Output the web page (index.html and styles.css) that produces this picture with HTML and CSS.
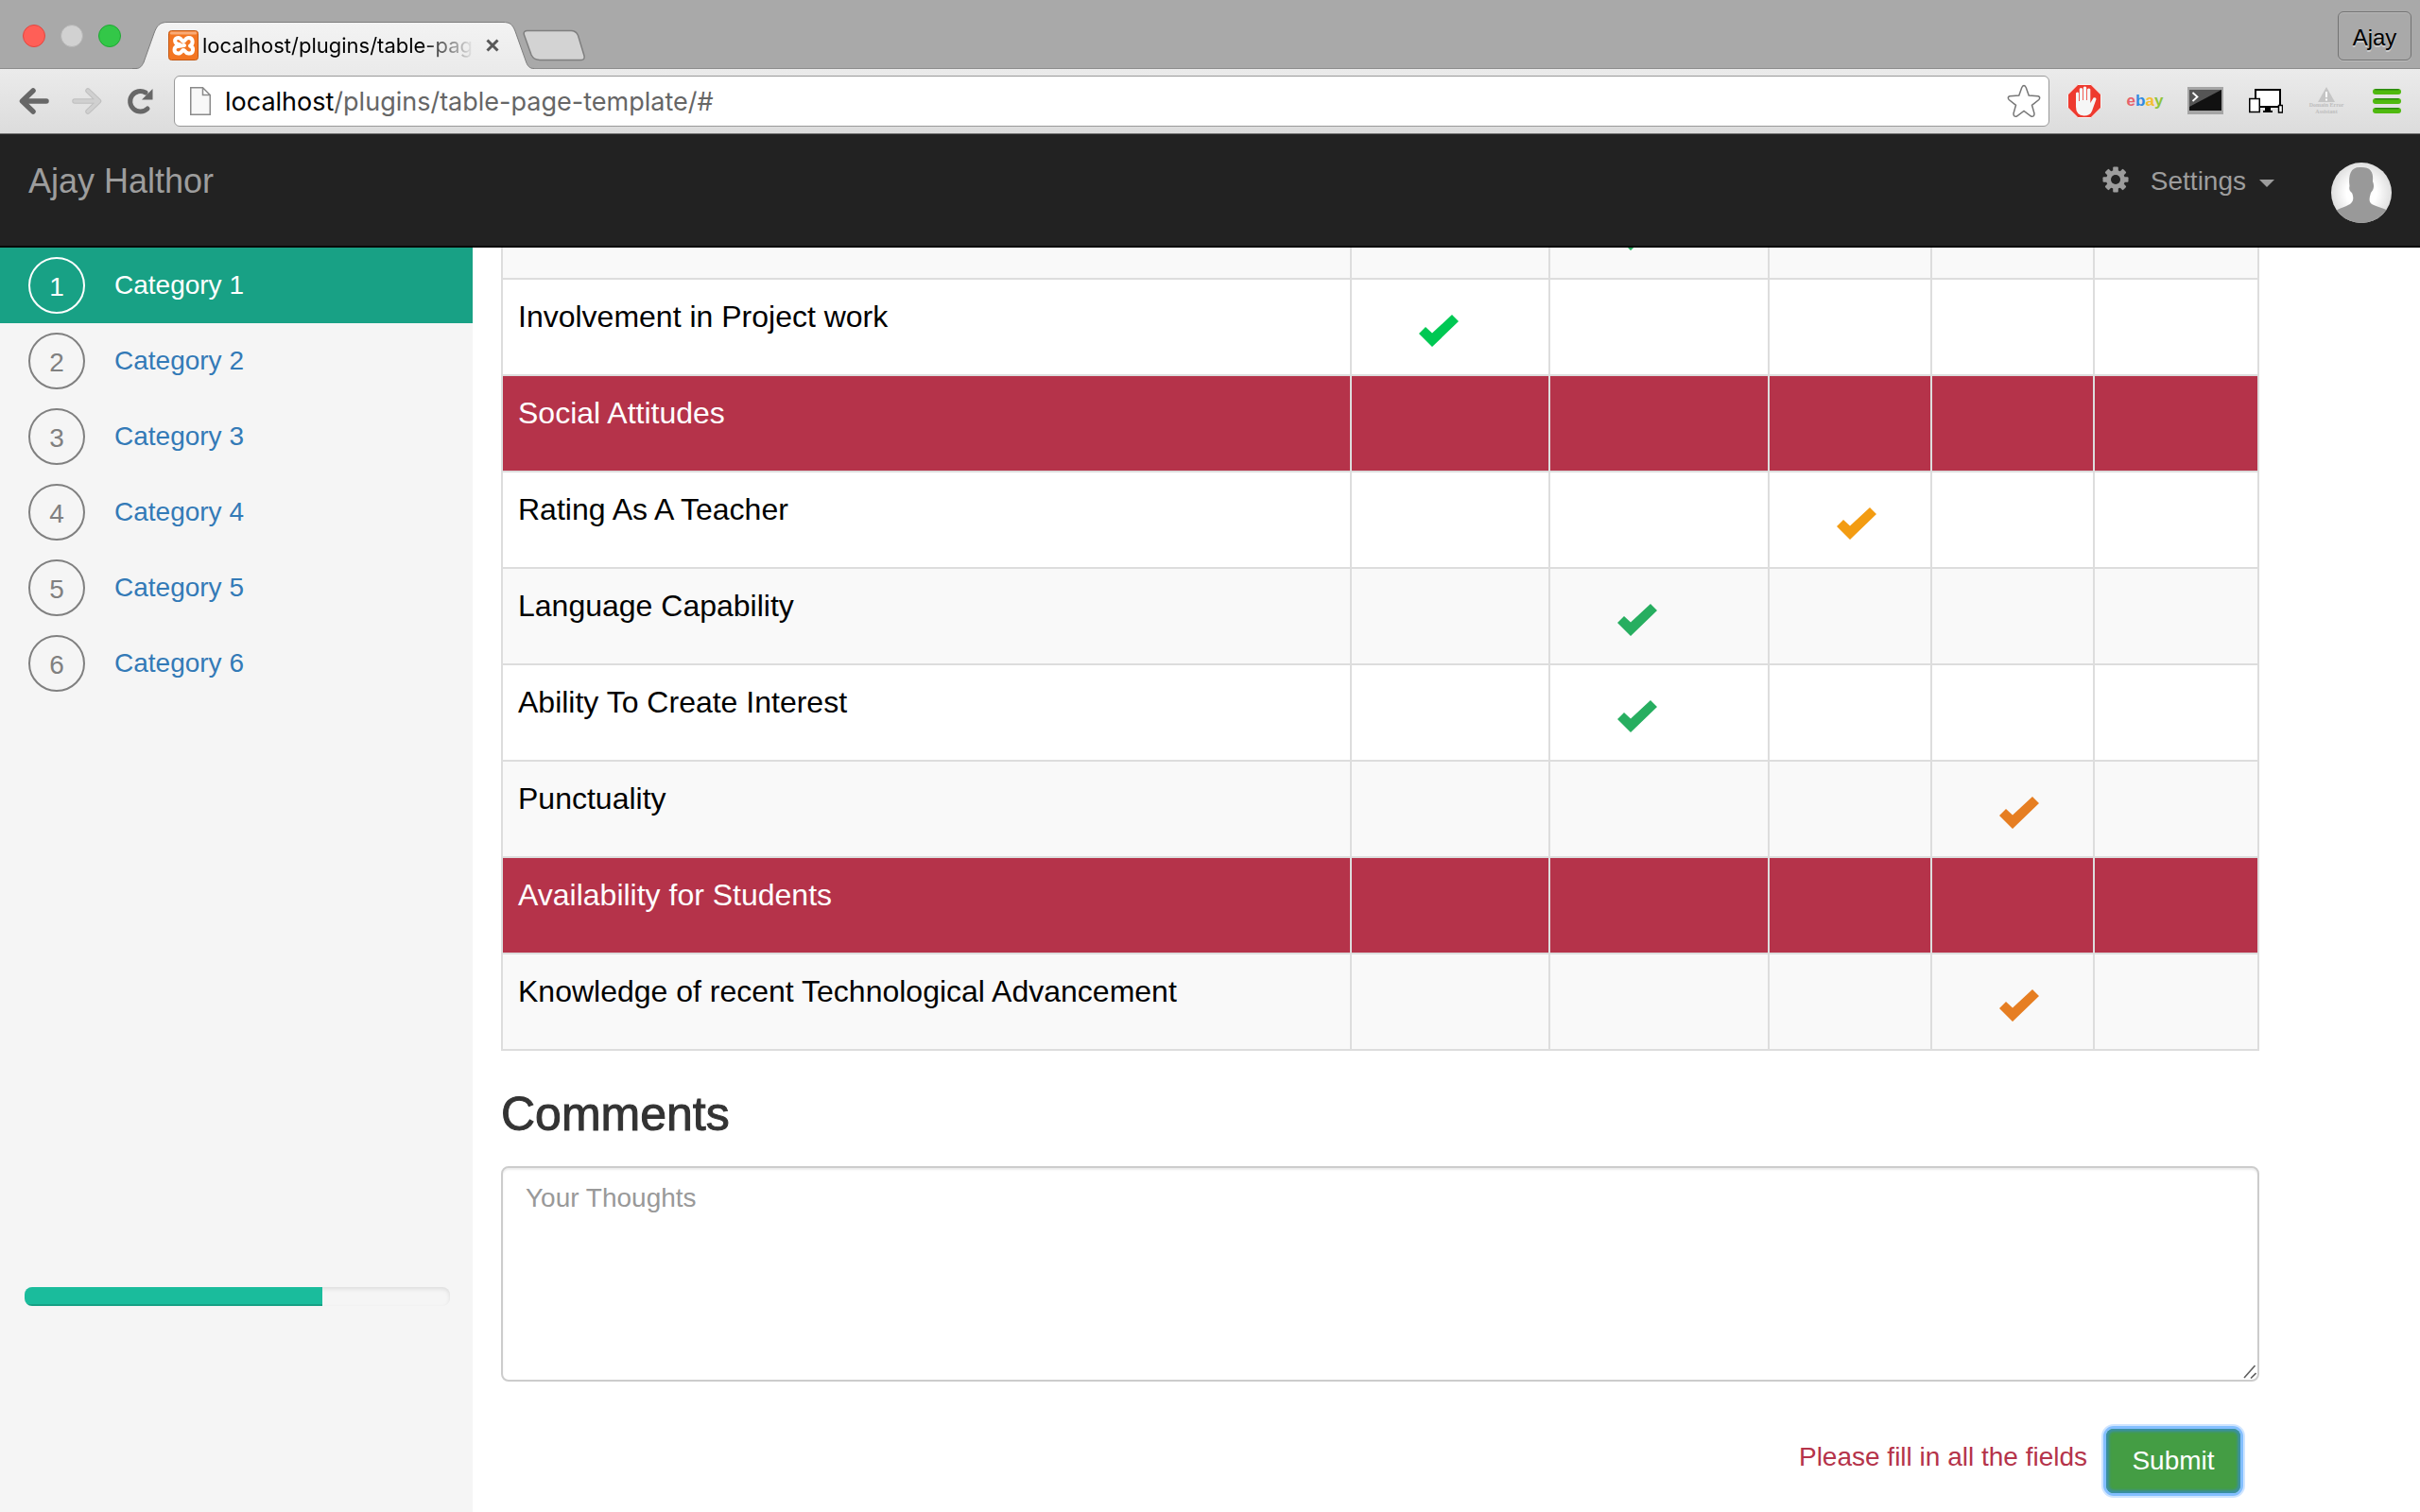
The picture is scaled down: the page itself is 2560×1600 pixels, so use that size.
FILE: index.html
```html
<!DOCTYPE html>
<html lang="en">
<head>
<meta charset="utf-8">
<title>localhost/plugins/table-page-template/#</title>
<link rel="stylesheet" href="styles.css">
</head>
<body>
<svg class="defs" aria-hidden="true">
  <defs>
    <symbol id="tick" viewBox="0 0 42 34"><path d="M0 20 L7 13 L14 19.500 L35 0 L42 7 L14 34 Z" fill="currentColor"/></symbol>
  </defs>
</svg>

<header class="browser">
  <div class="tabstrip">
    <div class="lights">
      <span class="light light-close"></span>
      <span class="light light-min"></span>
      <span class="light light-max"></span>
    </div>
    <div class="tab">
      <svg class="tab-shape" viewBox="0 0 425 50" aria-hidden="true">
        <defs><linearGradient id="tg" x1="0" y1="0" x2="0" y2="1"><stop offset="0" stop-color="#f3f3f3"/><stop offset="1" stop-color="#ebebeb"/></linearGradient></defs>
        <path d="M0 50 V49.500 H4 C8 49.500 10 47 12 43 L23 12 C26 4 29 .500 37 .500 H392 C400 .500 402 3 405 10 L416 41 C418 47 420 49.500 425 49.500 V50 Z" fill="url(#tg)"/>
        <path d="M0 49.500 H4 C8 49.500 10 47 12 43 L23 12 C26 4 29 .500 37 .500 H392 C400 .500 402 3 405 10 L416 41 C418 47 420 49.500 425 49.500" fill="none" stroke="#7d7d7d"/>
      </svg>
      <svg class="favicon" viewBox="0 0 32 32" aria-hidden="true">
        <rect x=".5" y=".5" width="31" height="31" rx="3" fill="#f37623" stroke="#c25a17"/>
        <rect x="2" y="1.500" width="28" height="3" rx="1" fill="#f9ab77"/>
        <path d="M12 15 C6 15 5.500 8 10.500 8 C14.500 8 14 12 16 12 C18 12 17.500 8 21.500 8 C27 8 26.500 15 23 16.500 C27.500 18 27 25 21.500 24.500 C17.500 24 18 21 16 21 C14 21 14.500 24.500 10.500 24.500 C5 24 5.500 17.500 10 17 L17 16" fill="none" stroke="#fff" stroke-width="4" stroke-linecap="round" stroke-linejoin="round"/>
      </svg>
      <span class="tab-title">localhost/plugins/table-pag</span>
      <button class="tab-close" aria-label="Close tab"><svg viewBox="0 0 14 14"><path d="M1.500 1.500 L12.500 12.500 M12.500 1.500 L1.500 12.500" stroke="#585858" stroke-width="3"/></svg></button>
    </div>
    <button class="newtab" aria-label="New tab"><svg viewBox="0 0 66 34"><path d="M5 1.500 H51 C55 1.500 57 3 58.500 6.500 L65 28 C65.500 31 64.500 32.500 62 32.500 H18 C13 32.500 11 31 9 27 L1.500 6 C.5 3 2 1.500 5 1.500 Z" fill="#d3d3d3" stroke="#7f7f7f" stroke-width="1.500"/></svg></button>
    <button class="profile">Ajay</button>
  </div>
  <div class="toolbar">
    <button class="tool nav-tool" aria-label="Back"><svg width="32" height="28" viewBox="0 0 32 28"><path d="M15 3 L3.500 14 L15 25 M4 14 H29" fill="none" stroke="#676767" stroke-width="5.500" stroke-linecap="round" stroke-linejoin="round"/></svg></button>
    <button class="tool nav-tool" aria-label="Forward"><svg width="32" height="28" viewBox="0 0 32 28"><path d="M17 3 L28.500 14 L17 25 M28 14 H3" fill="none" stroke="#bfbfbf" stroke-width="5.500" stroke-linecap="round" stroke-linejoin="round"/><path d="M17 3 L28.500 14 L17 25 M28 14 H3" fill="none" stroke="#d0d0d0" stroke-width="3.500" stroke-linecap="round" stroke-linejoin="round"/></svg></button>
    <button class="tool nav-tool" aria-label="Reload"><svg width="28" height="28" viewBox="0 0 28 28"><path d="M22 22 A10.800 10.800 0 1 1 20 5" fill="none" stroke="#676767" stroke-width="5" stroke-linecap="round"/><path d="M27.500 1 V12.500 H16 Z" fill="#676767"/></svg></button>
    <div class="omnibox">
      <svg width="22" height="30" viewBox="0 0 22 30" aria-hidden="true"><path d="M.75 .75 H13.500 L21.250 8.500 V29.250 H.75 Z M13.500 .75 V8.500 H21.250" fill="#f8f8f8" stroke="#8a8a8a" stroke-width="1.500"/></svg>
      <p class="url"><span class="host">localhost</span>/plugins/table-page-template/#</p>
      <button class="star" aria-label="Bookmark"><svg width="36" height="36" viewBox="0 0 36 36"><path d="M15.800 3.500 Q18 -.5 20.200 3.500 L23.200 12 L33 12.800 Q36 13.800 33.800 16.500 L26.500 22.300 L29 31 Q29.200 35 25.500 34 L18 28.500 L10.500 34 Q6.800 35 7 31 L9.500 22.300 L2.200 16.500 Q0 13.800 3 12.800 L12.800 12 Z" fill="#fff" stroke="#777" stroke-width="1.500"/></svg></button>
    </div>
    <div class="extensions">
      <button class="tool" aria-label="Ad blocker"><svg width="36" height="36" viewBox="0 0 36 36"><path d="M11 .5 H25 L35.500 11 V25 L25 35.500 H11 L.5 25 V11 Z" fill="#ee3a2f" stroke="#f7f1f0"/><path d="M9 9.500 Q10.800 7.500 12 9.500 V18 H12.800 V5 Q14.500 3 16 5 V17 H16.800 V3.500 Q18.500 1.500 20.200 3.500 V17 H21 V5.500 Q22.800 3.500 24.300 5.500 V20 L27.500 14.500 Q30.500 13.500 30.500 16 L26 28.500 Q24 33.500 17.500 33.500 Q9 33 9 24 Z" fill="#f6f6f6"/></svg></button>
      <button class="tool ebay" aria-label="eBay"><span class="e-red">e</span><span class="e-blue">b</span><span class="e-yellow">a</span><span class="e-green">y</span></button>
      <button class="tool" aria-label="Terminal"><svg width="38" height="30" viewBox="0 0 38 30"><rect width="38" height="29" fill="#a5a5a5"/><rect x="2" y="3" width="34" height="22" fill="#111"/><path d="M2 3 H36 L2 21 Z" fill="#555"/><path d="M5.500 6 L10.500 10.500 L5.500 15" fill="none" stroke="#fff" stroke-width="1.800"/></svg></button>
      <button class="tool" aria-label="Devices"><svg width="36" height="26" viewBox="0 0 36 26"><path d="M7 1 H33 V19 H7 Z" fill="#fff" stroke="#000" stroke-width="2"/><path d="M17 20 H23 V23 H25 V25 H15 V23 H17 Z" fill="#000"/><rect x=".75" y="10.500" width="10.500" height="14" fill="#fff" stroke="#000" stroke-width="1.500"/><rect x="31.500" y="17.500" width="4" height="7.500" fill="#fff" stroke="#000" stroke-width="1.500"/></svg></button>
      <button class="tool domain"><svg width="18" height="16" viewBox="0 0 18 16" aria-hidden="true"><path d="M9 0 L18 16 H0 Z" fill="#c5c5c5"/><path d="M9 5 V11 M9 12.500 V14.500" stroke="#fff" stroke-width="2"/></svg><span>Domain Error<br>Assistant</span></button>
      <button class="tool" aria-label="Menu"><svg width="30" height="26" viewBox="0 0 30 26"><g fill="#4fb90f"><rect width="30" height="6" rx="3"/><rect y="10" width="30" height="6" rx="3"/><rect y="20" width="30" height="6" rx="3"/></g><path d="M3 .75 H27 M3 10.750 H27 M3 20.750 H27" stroke="#2b8a10" stroke-width="1.500" stroke-linecap="round"/></svg></button>
    </div>
  </div>
</header>

<nav class="navbar">
  <a class="brand" href="#">Ajay Halthor</a>
  <a class="settings" href="#">
    <svg class="gear" viewBox="-14 -14 28 28" aria-hidden="true"><g fill="#9d9d9d"><g id="teeth"><rect x="-2.800" y="-13.500" width="5.600" height="27" rx="1"/><rect x="-13.500" y="-2.800" width="27" height="5.600" rx="1"/></g><use href="#teeth" transform="rotate(45)"/><circle r="10"/></g><circle r="5" fill="#222"/></svg>
    <span>Settings</span>
    <span class="caret"></span>
  </a>
  <a class="account" href="#" aria-label="Account">
    <svg class="avatar" viewBox="0 0 64 64"><defs><radialGradient id="ag"><stop offset="0" stop-color="#fff"/><stop offset=".5" stop-color="#fff"/><stop offset="1" stop-color="#dfdfdf"/></radialGradient><clipPath id="ac"><circle cx="32" cy="32" r="32"/></clipPath></defs><g clip-path="url(#ac)"><rect width="64" height="64" fill="url(#ag)"/><path d="M0 54 C6 49 15 47 20 44 C24 41 24 37 22 32 C19 30 19 27 19.500 25 C18 12 21 4 32 5 C41 5 45 9 44 20 C46 25 45 29 42 32 C41 36 39 41 43 44 C48 47 58 48 64 54 V64 H0 Z" fill="#999"/></g></svg>
  </a>
</nav>

<div class="page">
  <aside class="sidebar">
    <ul class="categories">
      <li><a class="category active" href="#"><span class="num">1</span>Category 1</a></li>
      <li><a class="category" href="#"><span class="num">2</span>Category 2</a></li>
      <li><a class="category" href="#"><span class="num">3</span>Category 3</a></li>
      <li><a class="category" href="#"><span class="num">4</span>Category 4</a></li>
      <li><a class="category" href="#"><span class="num">5</span>Category 5</a></li>
      <li><a class="category" href="#"><span class="num">6</span>Category 6</a></li>
    </ul>
    <div class="progress" role="progressbar" aria-valuenow="70" aria-valuemin="0" aria-valuemax="100"><div class="bar" style="width: 70%"></div></div>
  </aside>

  <main class="content">
    <div class="table-view">
      <table class="ratings">
        <colgroup><col><col class="c-a"><col class="c-b"><col class="c-c"><col class="c-c"><col class="c-d"></colgroup>
        <tbody>
          <tr class="alt"><td></td><td></td><td><svg class="tick good"><use href="#tick"/></svg></td><td></td><td></td><td></td></tr>
          <tr><td>Involvement in Project work</td><td><svg class="tick best"><use href="#tick"/></svg></td><td></td><td></td><td></td><td></td></tr>
          <tr class="group"><td>Social Attitudes</td><td></td><td></td><td></td><td></td><td></td></tr>
          <tr><td>Rating As A Teacher</td><td></td><td></td><td><svg class="tick fair"><use href="#tick"/></svg></td><td></td><td></td></tr>
          <tr class="alt"><td>Language Capability</td><td></td><td><svg class="tick good"><use href="#tick"/></svg></td><td></td><td></td><td></td></tr>
          <tr><td>Ability To Create Interest</td><td></td><td><svg class="tick good"><use href="#tick"/></svg></td><td></td><td></td><td></td></tr>
          <tr class="alt"><td>Punctuality</td><td></td><td></td><td></td><td><svg class="tick poor"><use href="#tick"/></svg></td><td></td></tr>
          <tr class="group"><td>Availability for Students</td><td></td><td></td><td></td><td></td><td></td></tr>
          <tr class="alt"><td>Knowledge of recent Technological Advancement</td><td></td><td></td><td></td><td><svg class="tick poor"><use href="#tick"/></svg></td><td></td></tr>
        </tbody>
      </table>
    </div>
    <form class="comments">
      <h2><label for="thoughts">Comments</label></h2>
      <div class="field">
        <textarea id="thoughts" placeholder="Your Thoughts"></textarea>
        <svg class="grip" viewBox="0 0 14 15" aria-hidden="true"><path d="M1 14 L12.500 1 M8 14.500 L13.500 9" stroke="#5f5f5f" stroke-width="1.600" fill="none"/></svg>
      </div>
      <div class="actions">
        <p class="error">Please fill in all the fields</p>
        <button class="submit" type="button">Submit</button>
      </div>
    </form>
  </main>
</div>
</body>
</html>
```

FILE: styles.css
```css
* { box-sizing: border-box; }

body {
  margin: 0;
  min-height: 100vh;
  display: flex;
  flex-direction: column;
  font-family: "Liberation Sans", Arial, sans-serif;
  font-size: 28px;
  line-height: 40px;
  color: #333;
  background: #fff;
}

button {
  font: inherit;
  border: 0;
  padding: 0;
  background: none;
}

a { text-decoration: none; }
svg { display: block; flex: none; }
p, h2, ul { margin: 0; padding: 0; }
.defs { position: absolute; width: 0; height: 0; }

/* Browser frame */
.tabstrip {
  display: flex;
  align-items: flex-end;
  height: 73px;
  padding-left: 24px;
  background: #a9a9a9;
  border-bottom: 1px solid #8c8c8c;
}

.lights {
  display: flex;
  gap: 16px;
  align-self: center;
  margin: 0 12px 0 0;
  padding-top: 4px;
}

.light {
  width: 24px;
  height: 24px;
  border-radius: 50%;
}

.light-close { background: #ff5f57; border: 1px solid #e2463f; }
.light-min { background: #d1d1d1; border: 1px solid #b5b5b5; }
.light-max { background: #33c748; border: 1px solid #1fa833; }

.tab {
  position: relative;
  display: flex;
  align-items: center;
  width: 425px;
  height: 50px;
  margin-bottom: -1px;
  padding-left: 38px;
}

.tab-shape {
  position: absolute;
  inset: 0;
  width: 100%;
  height: 100%;
}

.favicon { position: relative; width: 32px; height: 32px; }

.tab-title {
  position: relative;
  width: 288px;
  margin: 0 12px 0 4px;
  overflow: hidden;
  white-space: nowrap;
  font-family: Inter, Roboto, sans-serif;
  font-size: 22px;
  line-height: 32px;
  color: #000;
  -webkit-mask-image: linear-gradient(to right, #000 80%, transparent);
  mask-image: linear-gradient(to right, #000 80%, transparent);
}

.tab-close { position: relative; }
.tab-close svg { width: 14px; height: 14px; }

.newtab {
  position: relative;
  align-self: center;
  margin: 24px 0 0 -12px;
}
.newtab svg { width: 66px; height: 34px; }

.profile {
  align-self: center;
  width: 78px;
  height: 52px;
  margin: 3px 9px 0 auto;
  border: 1px solid #737373;
  border-radius: 6px;
  box-shadow: 0 1px 0 #bbb, inset 0 1px 0 #b9b9b9;
  padding-top: 4px;
  font-size: 24px;
  color: #000;
  text-shadow: 0 2px 0 #ccc;
}

.toolbar {
  display: flex;
  align-items: center;
  height: 69px;
  padding: 0 3px 0 8px;
  background: linear-gradient(#ebebeb, #dcdcdc);
  border-bottom: 1px solid #6f6f6f;
}

.tool {
  display: flex;
  align-items: center;
  justify-content: center;
  width: 64px;
  height: 54px;
}

.nav-tool { width: 56px; }

.omnibox {
  flex: 1;
  display: flex;
  align-items: center;
  height: 54px;
  margin: 0 5px 0 8px;
  padding: 0 8px 0 16px;
  background: #fff;
  border: 1px solid #999;
  border-radius: 6px;
}

.url {
  flex: 1;
  padding-top: 2px;
  margin-left: 15px;
  font-family: Inter, Roboto, sans-serif;
  font-size: 27px;
  color: #666;
}

.host { color: #000; }
.extensions { display: flex; }

.ebay {
  font-size: 17px;
  font-weight: bold;
  line-height: 24px;
}

.e-red { color: #e8606a; }
.e-blue { color: #2f8ae0; }
.e-yellow { color: #f5bd30; }
.e-green { color: #8fc43a; }

.domain {
  flex-direction: column;
  font-family: "Liberation Serif", serif;
  font-size: 6px;
  font-weight: bold;
  line-height: 7px;
  color: #bdbdbd;
}

/* Site navigation */
.navbar {
  display: flex;
  align-items: flex-start;
  height: 120px;
  padding: 30px;
  background: #222;
  border-bottom: 2px solid #080808;
}

.brand {
  margin-right: auto;
  font-size: 36px;
  color: #9d9d9d;
}

.settings {
  display: flex;
  align-items: center;
  color: #9d9d9d;
}

.gear { width: 28px; height: 28px; margin: 0 23px 4px 0; }

.caret {
  margin: 4px 60px 0 14px;
  border: 8px solid transparent;
  border-top-color: #9d9d9d;
  border-bottom: 0;
}

.avatar { width: 64px; height: 64px; }

/* Page body */
.page {
  flex: 1;
  display: flex;
}

.sidebar {
  display: flex;
  flex-direction: column;
  width: 500px;
  flex: none;
  background: #f5f5f5;
}

.categories { list-style: none; }

.category {
  display: flex;
  align-items: center;
  gap: 31px;
  padding: 10px 30px;
  color: #337ab7;
}

.num {
  width: 60px;
  height: 60px;
  padding-top: 2px;
  border: 2px solid #808080;
  border-radius: 50%;
  line-height: 56px;
  text-align: center;
  color: #808080;
}

.category.active { background: #18a185; color: #fff; }
.active .num { border-color: #fff; color: #fff; }

.progress {
  height: 20px;
  margin: auto 24px 218px 26px;
  overflow: hidden;
  border-radius: 8px;
  background: #f5f5f5;
  box-shadow: inset 0 2px 4px rgba(0, 0, 0, 0.1);
}

.bar {
  height: 100%;
  background: #1abc9c;
  box-shadow: inset 0 -2px 0 rgba(0, 0, 0, 0.15);
}

.content {
  flex: 1;
  padding: 0 170px 20px 30px;
}

.table-view { overflow: hidden; }

/* The sheet is scrolled part of the way through its first visible row */
.ratings {
  width: 100%;
  margin-top: -70px;
  table-layout: fixed;
  border-collapse: collapse;
  font-size: 32px;
  line-height: 46px;
  color: #000;
}

.c-a { width: 210px; }
.c-b { width: 232px; }
.c-c { width: 172px; }
.c-d { width: 174px; }

.ratings td {
  height: 102px;
  padding: 16px;
  vertical-align: top;
  border: 2px solid #ddd;
}

.alt { background: #f9f9f9; }
.group { background: #b5334a; color: #fff; }

.tick {
  width: 42px;
  height: 34px;
  margin: 21px 0 0 55px;
}

.best { color: #00c853; }
.good { color: #27ae60; }
.fair { color: #f39c12; }
.poor { color: #e67e22; }

.comments h2 {
  margin: 40px 0 28px;
  font-size: 50px;
  font-weight: normal;
  line-height: 54px;
  -webkit-text-stroke: 1px #333;
}

.field { position: relative; }

textarea {
  display: block;
  width: 100%;
  height: 228px;
  padding: 12px 24px;
  border: 2px solid #ccc;
  border-radius: 8px;
  box-shadow: inset 0 2px 2px rgba(0, 0, 0, 0.075);
  font: inherit;
  color: #555;
  resize: none;
}

textarea::placeholder { color: #999; }

.grip {
  position: absolute;
  right: 3px;
  bottom: 3px;
  width: 14px;
  height: 15px;
}

.actions {
  display: flex;
  justify-content: flex-end;
  align-items: center;
  gap: 20px;
  margin: 50px 20px 0 0;
}

.error {
  padding-bottom: 8px;
  color: #b5334a;
}

.submit {
  width: 142px;
  height: 68px;
  border-radius: 8px;
  background: #449d44;
  color: #fff;
  box-shadow: inset 0 0 3px 3px #3a8fa5, 0 0 0 3px #84bfff, 0 0 0 5px #cfe5ff;
}
```
